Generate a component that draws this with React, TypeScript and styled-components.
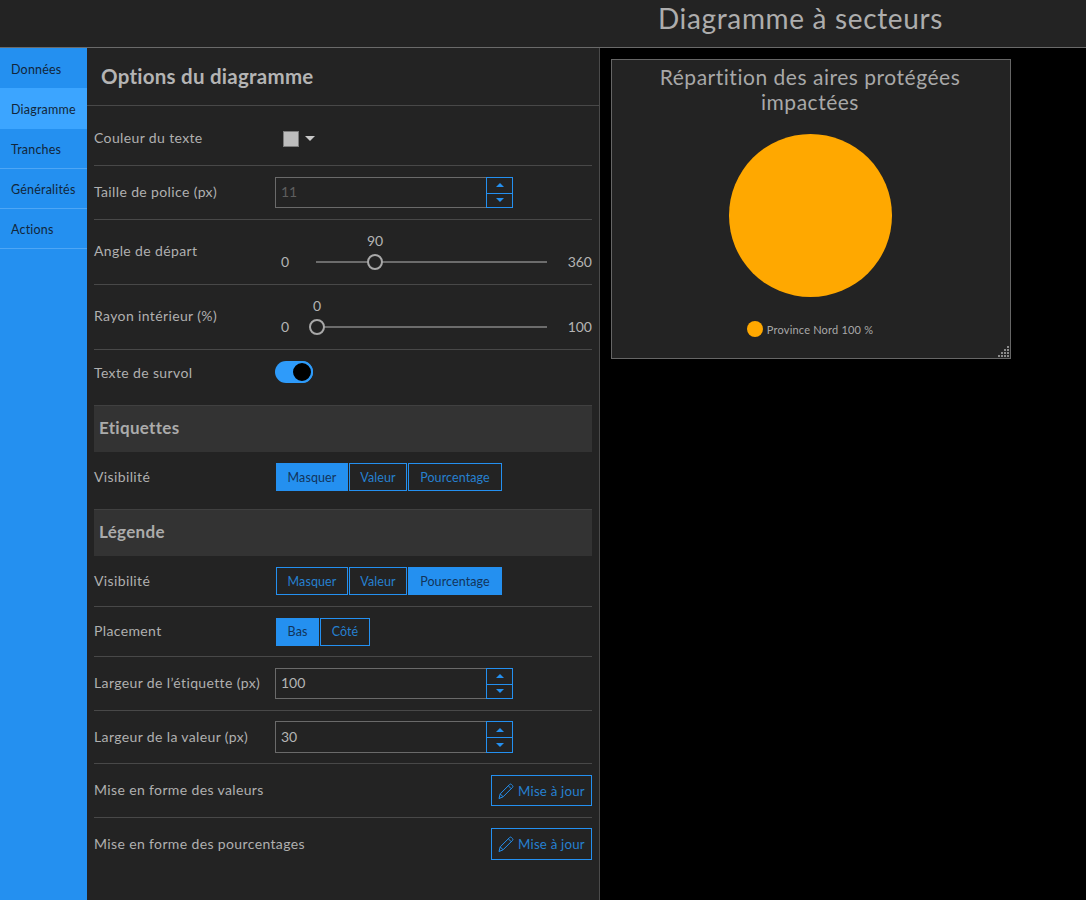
import React from "react";
import styled, { createGlobalStyle } from "styled-components";

const blue = "#2490f0";
const surface = "#232323";
const font = `Lato, "Open Sans", sans-serif`;

const GlobalStyle = createGlobalStyle`
  html, body { margin: 0; padding: 0; background: #000; }
  body { font-family: ${font}; color: #b8b8b8; }
  * { box-sizing: border-box; }
`;

const Page = styled.div`
  width: 1086px;
  height: 900px;
  display: flex;
  flex-direction: column;
  overflow: hidden;
`;

const Header = styled.header`
  height: 48px;
  flex: none;
  background: ${surface};
  border-bottom: 1px solid #6a6a6a;
  display: flex;
  justify-content: flex-end;
  padding-right: 143px;
`;

const HeaderTitle = styled.h1`
  margin: 0;
  font-size: 28px;
  line-height: 37px;
  font-weight: 400;
  letter-spacing: 0.65px;
  color: #adadad;
`;

const Body = styled.div`
  flex: 1;
  display: flex;
  min-height: 0;
`;

const Sidebar = styled.nav`
  width: 87px;
  flex: none;
  background: ${blue};
  display: flex;
  flex-direction: column;
`;

const NavItem = styled.div<{ $active?: boolean; $h: number; $line?: boolean }>`
  height: ${(p) => p.$h}px;
  padding: 2px 0 0 11px;
  display: flex;
  align-items: center;
  font-size: 12.5px;
  letter-spacing: 0.2px;
  color: #12263a;
  background: ${(p) => (p.$active ? "#3ca5ff" : "transparent")};
  border-bottom: ${(p) => (p.$line ? "1px solid #4ea6f5" : "none")};
`;

const Panel = styled.section`
  width: 513px;
  flex: none;
  background: ${surface};
  border-right: 1px solid #4a4a4a;
  display: flex;
  flex-direction: column;
`;

const PanelTitle = styled.h2`
  margin: 0;
  height: 58px;
  flex: none;
  padding: 0 0 2px 14px;
  display: flex;
  align-items: center;
  font-size: 20.5px;
  font-weight: 700;
  letter-spacing: 0.25px;
  color: #b4b4b4;
  border-bottom: 1px solid #484848;
`;

const Rows = styled.div`
  padding: 0 7px;
  display: flex;
  flex-direction: column;
`;

const Row = styled.div<{ $h: number; $line?: boolean; $pt?: number }>`
  height: ${(p) => p.$h}px;
  flex: none;
  padding-top: ${(p) => p.$pt ?? 0}px;
  display: flex;
  align-items: center;
  border-bottom: ${(p) => (p.$line === false ? "none" : "1px solid #484848")};
`;

const Label = styled.span<{ $up?: number }>`
  width: 181px;
  flex: none;
  padding-bottom: ${(p) => p.$up ?? 2}px;
  font-size: 14px;
  letter-spacing: 0.37px;
  color: #b0b0b0;
`;

const WideLabel = styled(Label)`
  width: auto;
  flex: 1;
`;

const Swatch = styled.span`
  width: 16px;
  height: 16px;
  margin-left: 8px;
  background: #bdbdbd;
  border: 1px solid #7c7c7c;
`;

const Caret = styled.span`
  margin-left: 6px;
  border-left: 5.5px solid transparent;
  border-right: 5.5px solid transparent;
  border-top: 5px solid #c8c8c8;
`;

const Stepper = styled.div<{ $h: number }>`
  width: 238px;
  height: ${(p) => p.$h}px;
  display: flex;
`;

const NumberField = styled.div<{ $muted?: boolean }>`
  flex: 1;
  border: 1px solid #6a6a6a;
  border-right: none;
  padding: 0 0 2px 5px;
  display: flex;
  align-items: center;
  font-size: 14px;
  color: ${(p) => (p.$muted ? "#5e5e5e" : "#b4b4b4")};
`;

const StepButtons = styled.div`
  width: 27px;
  display: grid;
  grid-template-rows: 1fr 1fr;
  border: 1px solid ${blue};
`;

const StepButton = styled.span<{ $down?: boolean }>`
  display: flex;
  align-items: center;
  justify-content: center;
  border-top: ${(p) => (p.$down ? `1px solid ${blue}` : "none")};

  &::after {
    content: "";
    border-left: 4px solid transparent;
    border-right: 4px solid transparent;
    border-bottom: ${(p) => (p.$down ? "none" : `4px solid ${blue}`)};
    border-top: ${(p) => (p.$down ? `4px solid ${blue}` : "none")};
  }
`;

const SliderWrap = styled.div`
  flex: 1;
  height: 100%;
  display: flex;
  align-items: flex-end;
  padding-bottom: 13px;
  margin-left: 6px;
  font-size: 14px;
  color: #b4b4b4;
`;

const SliderMin = styled.span`
  width: 35px;
  line-height: 18px;
`;

const SliderMax = styled.span`
  width: 45px;
  text-align: right;
  line-height: 18px;
`;

const Track = styled.div`
  position: relative;
  width: 231px;
  height: 2px;
  margin-bottom: 8px;
  background: #6c6c6c;
`;

const Thumb = styled.span`
  position: absolute;
  top: -7px;
  width: 16px;
  height: 16px;
  margin-left: -8px;
  border-radius: 50%;
  background: ${surface};
  border: 2px solid #a8a8a8;
`;

const ThumbValue = styled.span`
  position: absolute;
  top: -29px;
  transform: translateX(-50%);
  line-height: 18px;
`;

const Toggle = styled.span`
  position: relative;
  width: 38px;
  height: 22px;
  border-radius: 11px;
  background: #2e9bfa;
  margin-bottom: 2px;
`;

const Knob = styled.span`
  position: absolute;
  right: 0;
  top: 0;
  width: 22px;
  height: 22px;
  border-radius: 50%;
  background: #000;
  border: 2px solid #2e9bfa;
`;

const SectionTitle = styled.h3<{ $mt: number }>`
  margin: ${(p) => p.$mt}px 0 0;
  height: 47px;
  flex: none;
  padding: 0 0 3px 5px;
  display: flex;
  align-items: center;
  background: #333;
  border-top: 1px solid #404040;
  font-size: 17px;
  font-weight: 700;
  letter-spacing: 0.3px;
  color: #ababab;
`;

const Segments = styled.div`
  display: flex;
  gap: 1px;
  margin-left: 1px;
`;

const Segment = styled.span<{ $on?: boolean; $w: number }>`
  width: ${(p) => p.$w}px;
  height: 28px;
  display: flex;
  align-items: center;
  justify-content: center;
  font-size: 12.5px;
  letter-spacing: 0.1px;
  border: 1px solid ${blue};
  background: ${(p) => (p.$on ? blue : "transparent")};
  color: ${(p) => (p.$on ? "#12345a" : "#2680d0")};
`;

const UpdateButton = styled.span<{ $h: number }>`
  width: 101px;
  height: ${(p) => p.$h}px;
  flex: none;
  display: flex;
  align-items: center;
  justify-content: center;
  gap: 4px;
  border: 1px solid ${blue};
  font-size: 13.3px;
  letter-spacing: 0.2px;
  color: #2680d0;
`;

const Main = styled.main`
  flex: 1;
  background: #000;
  padding: 11px 0 0 11px;
`;

const ChartCard = styled.div`
  position: relative;
  width: 400px;
  height: 300px;
  padding-right: 2px;
  background: ${surface};
  border: 1px solid #666;
  display: flex;
  flex-direction: column;
  align-items: center;
`;

const ChartTitle = styled.div`
  width: 340px;
  margin-top: 4px;
  text-align: center;
  font-size: 21px;
  line-height: 25px;
  letter-spacing: 0.52px;
  color: #a8a8a8;
`;

const Pie = styled.div`
  width: 163px;
  height: 163px;
  margin-top: 20px;
  border-radius: 50%;
  background: #ffa800;
`;

const Legend = styled.div`
  margin-top: 24px;
  display: flex;
  align-items: center;
  gap: 4px;
  font-size: 11px;
  letter-spacing: 0.2px;
  color: #a8a8a8;
`;

const LegendDot = styled.span`
  width: 16px;
  height: 16px;
  border-radius: 50%;
  background: #ffa800;
`;

const Grip = styled.svg`
  position: absolute;
  right: 1px;
  bottom: 1px;
`;

const Pencil = () => (
  <svg width="16" height="16" viewBox="0 0 16 16" fill="none" stroke={blue} strokeWidth="1">
    <path d="M1 15.5l1.2-4.6L11.6 1.5a1.3 1.3 0 0 1 1.8 0l1.1 1.1a1.3 1.3 0 0 1 0 1.8L5.1 13.8z" />
    <path d="M2.2 10.9l2.9 2.9M10.3 2.8l2.9 2.9" />
  </svg>
);

const NumberRow = ({
  label,
  value,
  h,
  fieldH = 31,
  muted,
}: {
  label: string;
  value: string;
  h: number;
  fieldH?: number;
  muted?: boolean;
}) => (
  <Row $h={h}>
    <Label>{label}</Label>
    <Stepper $h={fieldH}>
      <NumberField $muted={muted}>{value}</NumberField>
      <StepButtons>
        <StepButton />
        <StepButton $down />
      </StepButtons>
    </Stepper>
  </Row>
);

const SliderRow = ({ label, max, value, pos }: { label: string; max: string; value: string; pos: number }) => (
  <Row $h={65}>
    <Label $up={4}>{label}</Label>
    <SliderWrap>
      <SliderMin>0</SliderMin>
      <Track>
        <Thumb style={{ left: pos }} />
        <ThumbValue style={{ left: pos }}>{value}</ThumbValue>
      </Track>
      <SliderMax>{max}</SliderMax>
    </SliderWrap>
  </Row>
);

type SegmentItem = { text: string; width: number };

const SegmentGroup = ({ items, on }: { items: SegmentItem[]; on: string }) => (
  <Segments>
    {items.map((item) => (
      <Segment key={item.text} $w={item.width} $on={item.text === on}>
        {item.text}
      </Segment>
    ))}
  </Segments>
);

const UpdateRow = ({ label, h, btnH, line }: { label: string; h: number; btnH: number; line?: boolean }) => (
  <Row $h={h} $line={line}>
    <WideLabel>{label}</WideLabel>
    <UpdateButton $h={btnH}>
      <Pencil />
      Mise à jour
    </UpdateButton>
  </Row>
);

const visibility: SegmentItem[] = [
  { text: "Masquer", width: 72 },
  { text: "Valeur", width: 58 },
  { text: "Pourcentage", width: 94 },
];

const placement: SegmentItem[] = [
  { text: "Bas", width: 43 },
  { text: "Côté", width: 50 },
];

export default function App() {
  return (
    <Page>
      <GlobalStyle />
      <Header>
        <HeaderTitle>Diagramme à secteurs</HeaderTitle>
      </Header>
      <Body>
        <Sidebar>
          <NavItem $h={40}>Données</NavItem>
          <NavItem $h={41} $active>Diagramme</NavItem>
          <NavItem $h={40} $line>Tranches</NavItem>
          <NavItem $h={40} $line>Généralités</NavItem>
          <NavItem $h={40} $line>Actions</NavItem>
        </Sidebar>
        <Panel>
          <PanelTitle>Options du diagramme</PanelTitle>
          <Rows>
            <Row $h={60} $pt={6}>
              <Label>Couleur du texte</Label>
              <Swatch />
              <Caret />
            </Row>
            <NumberRow label="Taille de police (px)" value="11" h={54} muted />
            <SliderRow label="Angle de départ" max="360" value="90" pos={59} />
            <SliderRow label="Rayon intérieur (%)" max="100" value="0" pos={1} />
            <Row $h={46} $line={false}>
              <Label>Texte de survol</Label>
              <Toggle>
                <Knob />
              </Toggle>
            </Row>
            <SectionTitle $mt={9}>Etiquettes</SectionTitle>
            <Row $h={50} $line={false}>
              <Label>Visibilité</Label>
              <SegmentGroup items={visibility} on="Masquer" />
            </Row>
            <SectionTitle $mt={7}>Légende</SectionTitle>
            <Row $h={51}>
              <Label>Visibilité</Label>
              <SegmentGroup items={visibility} on="Pourcentage" />
            </Row>
            <Row $h={50}>
              <Label>Placement</Label>
              <SegmentGroup items={placement} on="Bas" />
            </Row>
            <NumberRow label="Largeur de l’étiquette (px)" value="100" h={54} />
            <NumberRow label="Largeur de la valeur (px)" value="30" h={53} fieldH={32} />
            <UpdateRow label="Mise en forme des valeurs" h={54} btnH={31} />
            <UpdateRow label="Mise en forme des pourcentages" h={52} btnH={32} line={false} />
          </Rows>
        </Panel>
        <Main>
          <ChartCard>
            <ChartTitle>Répartition des aires protégées impactées</ChartTitle>
            <Pie />
            <Legend>
              <LegendDot />
              Province Nord 100 %
            </Legend>
            <Grip width="12" height="12" viewBox="0 0 12 12" fill="#8a8a8a">
              <rect x="10" y="1" width="2" height="2" />
              <rect x="7" y="4" width="2" height="2" />
              <rect x="10" y="4" width="2" height="2" />
              <rect x="4" y="7" width="2" height="2" />
              <rect x="7" y="7" width="2" height="2" />
              <rect x="10" y="7" width="2" height="2" />
              <rect x="1" y="10" width="2" height="2" />
              <rect x="4" y="10" width="2" height="2" />
              <rect x="7" y="10" width="2" height="2" />
              <rect x="10" y="10" width="2" height="2" />
            </Grip>
          </ChartCard>
        </Main>
      </Body>
    </Page>
  );
}
